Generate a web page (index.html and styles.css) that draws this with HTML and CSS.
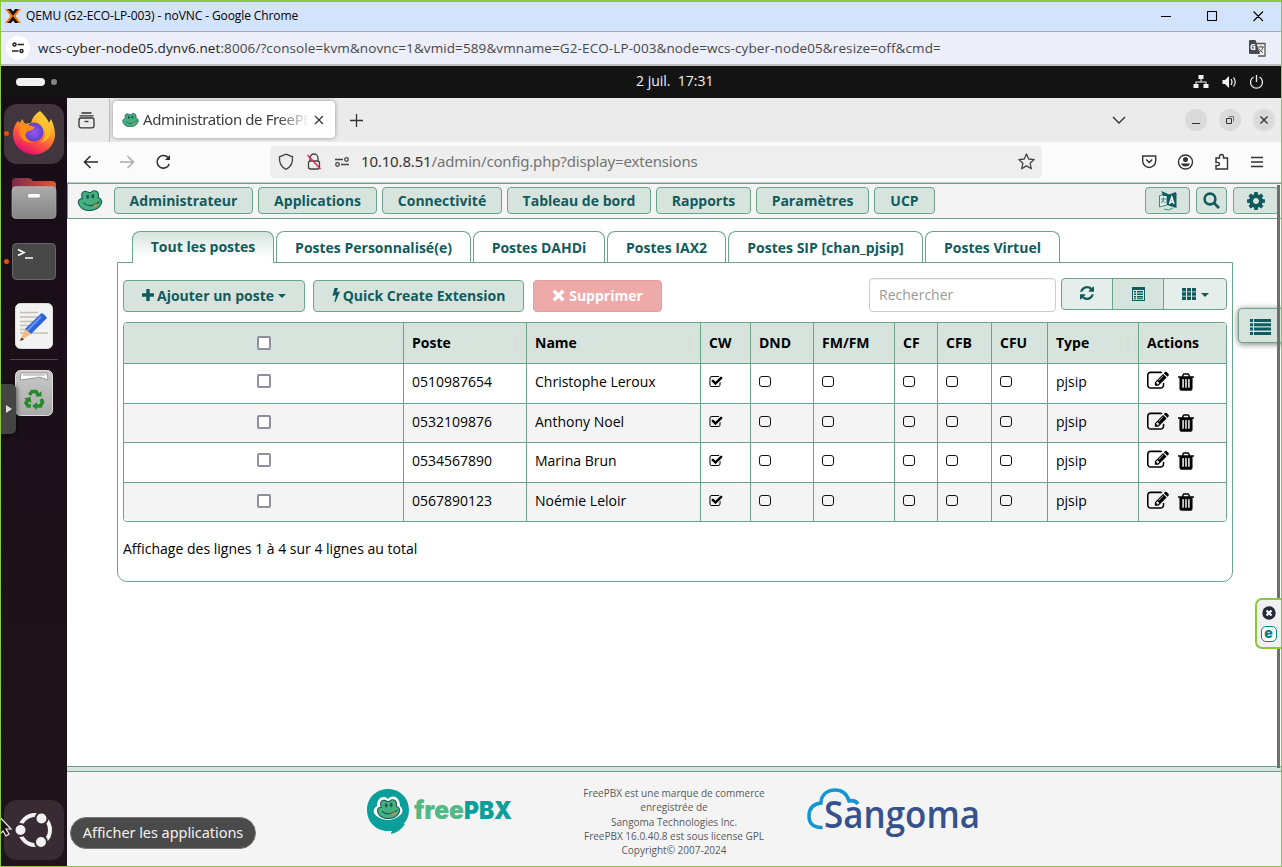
FILE: index.html
```html
<!DOCTYPE html>
<html lang="fr">
<head>
<meta charset="utf-8">
<title>Administration de FreePBX</title>
<link rel="stylesheet" href="styles.css">
</head>
<body>
<svg class="defs" width="0" height="0">
  <symbol id="checked" viewBox="0 0 1792 1792"><path d="M1472 930v318q0 119-84.5 203.5t-203.5 84.5h-832q-119 0-203.500-84.500t-84.500-203.500v-832q0-119 84.500-203.500t203.500-84.500h832q63 0 117 25 15 7 18 23 3 17-9 29l-49 49q-10 10-23 10-3 0-9-2-23-6-45-6h-832q-66 0-113 47t-47 113v832q0 66 47 113t113 47h832q66 0 113-47t47-113v-254q0-13 9-22l64-64q10-10 23-10 6 0 12 3 20 8 20 29zm231-489l-814 814q-24 24-57 24t-57-24l-430-430q-24-24-24-57t24-57l110-110q24-24 57-24t57 24l263 263 647-647q24-24 57-24t57 24l110 110q24 24 24 57t-24 57z"/></symbol>
  <symbol id="edit" viewBox="0 0 1792 1792"><path d="M888 1184l116-116-152-152-116 116v56h96v96h56zm440-720q-16-16-33 1l-350 350q-17 17-1 33t33-1l350-350q17-17 1-33zm80 594v190q0 119-84.500 203.500t-203.500 84.500h-832q-119 0-203.500-84.500t-84.500-203.500v-832q0-119 84.500-203.500t203.500-84.500h832q63 0 117 25 15 7 18 23 3 17-9 29l-49 49q-14 14-32 8-23-6-45-6h-832q-66 0-113 47t-47 113v832q0 66 47 113t113 47h832q66 0 113-47t47-113v-126q0-13 9-22l64-64q15-15 35-7t20 29zm-96-738l288 288-672 672h-288v-288zm444 132l-92 92-288-288 92-92q28-28 68-28t68 28l152 152q28 28 28 68t-28 68z"/></symbol>
  <symbol id="trash" viewBox="192 128 1408 1536"><path d="M704 1376v-704q0-14-9-23t-23-9h-64q-14 0-23 9t-9 23v704q0 14 9 23t23 9h64q14 0 23-9t9-23zm256 0v-704q0-14-9-23t-23-9h-64q-14 0-23 9t-9 23v704q0 14 9 23t23 9h64q14 0 23-9t9-23zm256 0v-704q0-14-9-23t-23-9h-64q-14 0-23 9t-9 23v704q0 14 9 23t23 9h64q14 0 23-9t9-23zm-544-992h448l-48-117q-7-9-17-11h-317q-10 2-17 11zm928 32v64q0 14-9 23t-23 9h-96v948q0 83-47 143.500t-113 60.500h-832q-66 0-113-58.500t-47-141.500v-952h-96q-14 0-23-9t-9-23v-64q0-14 9-23t23-9h309l70-167q15-37 54-63t79-26h320q40 0 79 26t54 63l70 167h309q14 0 23 9t9 23z"/></symbol>
  <symbol id="gear" viewBox="128 128 1536 1536"><path d="M1152 896q0-106-75-181t-181-75-181 75-75 181 75 181 181 75 181-75 75-181zm512-109v222q0 12-8 23t-20 13l-185 28q-19 54-39 91 35 50 107 138 10 12 10 25t-9 23q-27 37-99 108t-94 71q-12 0-26-9l-138-108q-44 23-91 38-16 136-29 186-7 28-36 28h-222q-14 0-24.500-8.500t-11.500-21.500l-28-184q-49-16-90-37l-141 107q-10 9-25 9-14 0-25-11-126-114-165-168-7-10-7-23 0-12 8-23 15-21 51-66.500t54-70.500q-27-50-41-99l-183-27q-13-2-21-12.500t-8-23.500v-222q0-12 8-23t19-13l186-28q14-46 39-92-40-57-107-138-10-12-10-24 0-10 9-23 26-36 98.500-107.500t94.500-71.500q13 0 26 10l138 107q44-23 91-38 16-136 29-186 7-28 36-28h222q14 0 24.500 8.500t11.500 21.500l28 184q49 16 90 37l142-107q9-9 24-9 13 0 25 10 129 119 165 170 7 8 7 22 0 12-8 23-15 21-51 66.500t-54 70.500q26 50 41 98l183 28q13 2 21 12.500t8 23.500z"/></symbol>
  <symbol id="refresh" viewBox="128 128 1536 1536"><path d="M1639 1056q0 5-1 7-64 268-268 434.500t-478 166.500q-146 0-282.500-55t-243.500-157l-129 129q-19 19-45 19t-45-19-19-45v-448q0-26 19-45t45-19h448q26 0 45 19t19 45-19 45l-137 137q71 66 161 102t187 36q134 0 250-65t186-179q11-17 53-117 8-23 30-23h192q13 0 22.500 9.500t9.500 22.500zm25-800v448q0 26-19 45t-45 19h-448q-26 0-45-19t-19-45 19-45l138-138q-148-137-349-137-134 0-250 65t-186 179q-11 17-53 117-8 23-30 23h-199q-13 0-22.500-9.500t-9.500-22.500v-7q65-268 270-434.500t480-166.500q146 0 284 55.500t245 156.500l130-129q19-19 45-19t45 19 19 45z"/></symbol>
  <symbol id="frog" viewBox="0 0 26 22"><path d="M5 9C3 3 6 .8 9 1.500c1.500.4 2.500 1.300 4 1.300S14.500 1 17 .8c4.500-.3 5.500 3.500 4.500 7.200 3.500 1 4.500 4 3 7C22 20 17 21.500 12 21.500 6 21.500 2 18 1 14c-.6-3 1-5 4-5z" fill="#46b07c" stroke="#1b5a5e" stroke-width="1.200"/><ellipse cx="10.500" cy="7" rx="1.500" ry="2.300" fill="#125b61"/><ellipse cx="16" cy="6.500" rx="1.500" ry="2.300" fill="#125b61"/><path d="M6 13.500c4 4 11 4 17-1.500" fill="none" stroke="#125b61" stroke-width="1.200"/><path d="M16 16.500l4.500-2.500c0 3-2.500 4.500-4.500 2.500z" fill="#f08a2c"/></symbol>
</svg>

<div class="window">
  <header class="titlebar">
    <svg class="qemu" width="16" height="14" viewBox="0 0 16 14"><path d="M0 0h3.500L8 5.500 12.500 0H16l-5.500 7 5.500 7h-3.500L8 8.500 3.500 14H0l5.500-7z" fill="#ef7a12"/><path d="M2.500 0H6l2 2.500L10 0h3.500L8 6.700zM2.500 14H6l2-2.500 2 2.500h3.500L8 7.300z" fill="#16110e"/></svg>
    <span class="wintitle">QEMU (G2-ECO-LP-003) - noVNC - Google Chrome</span>
    <svg class="winctl" width="106" height="12" viewBox="0 0 106 12" fill="none" stroke="#000" stroke-width="1.100"><path d="M1 6.500h10M47.500 1.500h9v9h-9zM93.500 1.500l9.500 9.500M103 1.500L93.500 11"/></svg>
  </header>
  <div class="addressbar">
    <span class="siteinfo"><svg width="12" height="12" viewBox="0 0 12 12" fill="none" stroke="#222" stroke-width="1.500"><circle cx="2.500" cy="2.500" r="1.500"/><path d="M5.500 2.500H12M0 9h6.500"/><circle cx="9.500" cy="9" r="1.500"/></svg></span>
    <span class="vncurl"><b>wcs-cyber-node05.dynv6.net</b>:8006/?console=kvm&amp;novnc=1&amp;vmid=589&amp;vmname=G2-ECO-LP-003&amp;node=wcs-cyber-node05&amp;resize=off&amp;cmd=</span>
    <svg class="gtrans" width="17" height="17" viewBox="0 0 17 17"><path d="M7 3.500h9v12.500H9" fill="#f5f5f8" stroke="#555" stroke-width="1.300"/><path d="M1 0h5.500l4.500 14H1q-1 0-1-1V1q0-1 1-1z" fill="#474a4d"/><text x="1" y="10" class="gletter">G</text><path d="M9 7h6M12 5.500V7M14 7c-.7 3-2 4-4 5M10 8.500c1 2 2 3 4 4" stroke="#555" fill="none"/></svg>
  </div>

  <div class="gnomebar">
    <span class="workspace"></span><span class="wsdot"></span>
    <span class="clock">2 juil.&nbsp; 17:31</span>
    <svg class="tray" width="72" height="16" viewBox="0 0 72 16" fill="#f2f2f2"><path d="M5.500 1h5v4h-5zM7.500 5h1v3h-1zM2.500 7.500h11V11h-1V8.500h-9V11h-1zM.500 10h5v4h-5zM10.500 10h5v4h-5zM29.500 6h2.500l4-4v12l-4-4h-2.500z"/><path d="M38 5q2 3 0 6M40.500 3.500q3.500 4.500 0 9" fill="none" stroke="#ddd" stroke-width="1.300"/><path d="M60.500 3a6 6 0 1 0 6 0M63.500 1V8" fill="none" stroke="#eee" stroke-width="1.300"/></svg>
  </div>

  <div class="desktop">
    <aside class="dock">
      <div class="tile active"><svg width="44" height="46" viewBox="0 0 44 46">
        <defs><linearGradient id="fx" x1=".8" y1="0" x2=".3" y2="1"><stop offset="0" stop-color="#ffe94a"/><stop offset=".4" stop-color="#ff9a22"/><stop offset=".7" stop-color="#ff4b45"/><stop offset="1" stop-color="#e00a72"/></linearGradient><radialGradient id="orb"><stop offset="0" stop-color="#9a54f0"/><stop offset="1" stop-color="#5d42c5"/></radialGradient></defs>
        <path d="M28 1c4 4 7 7 9 12l2-4c3 6 4 11 4 16A21 20 0 0 1 1 24C1 19 3 14 6 11l2 2 2-4 3 5c2-1 4-1 6-1 1-5 4-9 9-12z" fill="url(#fx)"/><circle cx="22" cy="22" r="9.500" fill="url(#orb)"/><path d="M9 12c7 2 8 4 14 5-2 4-7 3-9 6-2 4 2 9 8 9-12 3-18-9-13-20z" fill="#ff8b18"/><path d="M28 2c-7 7-1 11 3 16s2 12-3 15c10-2 14-12 8-22" fill="#ffc52d" opacity=".75"/></svg></div>
      <svg class="files" width="44" height="42" viewBox="0 0 44 42"><defs><linearGradient id="fl"><stop stop-color="#792b50"/><stop offset="1" stop-color="#e3582b"/></linearGradient><linearGradient id="gr" x2="0" y2="1"><stop stop-color="#aaa"/><stop offset="1" stop-color="#858585"/></linearGradient></defs><path d="M0 4q0-4 4-4h12q3 0 5 3h19q4 0 4 4v16H0z" fill="url(#fl)"/><rect y="8.500" width="44" height="32" rx="4" fill="url(#gr)" stroke="#aaa" stroke-width=".7"/><rect x="16" y="16" width="12" height="3.500" rx="1.500" fill="#fff"/></svg>
      <svg class="term" width="44" height="38" viewBox="0 0 44 38"><rect x=".5" y=".5" width="43" height="36" rx="4" fill="#484848" stroke="#686868"/><path d="M6 6.500l6 3-6 3M13 15h8" fill="none" stroke="#fff" stroke-width="1.700"/></svg>
      <svg class="writer" width="38" height="46" viewBox="0 0 38 46"><rect x=".5" y=".5" width="37" height="45" rx="5" fill="#f2f2f2" stroke="#ddd"/><path d="M5 9.500h18M5 14h22M5 18.500h17M5 22.500h12M5 26.500h10M5 30h28" stroke="#c2c0b2" stroke-width="1.600"/><path d="M26 10.500q2-1 6 4.500L16 31l-6-5z" fill="#2e62d8"/><path d="M26 13.500L12 28" stroke="#6b95ef" stroke-width="2"/><path d="M10 26l6 5-11 7z" fill="#f2bd83"/><path d="M6.500 34.500l2.500 2L5 38z" fill="#333"/></svg>
      <hr class="docksep">
      <svg class="bin" width="38" height="46" viewBox="0 0 38 46"><defs><linearGradient id="bn" x2="0" y2="1"><stop stop-color="#c9c9c9"/><stop offset="1" stop-color="#aaa"/></linearGradient></defs><rect x=".5" y=".5" width="37" height="45" rx="5" fill="url(#bn)" stroke="#ddd"/><path d="M5 10l1-7h26l1 7-8-3-12 2z" fill="#fff" stroke="#777" stroke-width=".7"/><path d="M8 5h22" stroke="#999"/><g fill="none" stroke="#268a2b" stroke-width="3.600"><path d="M14.500 25l2.500-3.500h4l2.500 4"/><path d="M26 29l1.500 3-2 4H21"/><path d="M16 36h-3l-2-3 2.500-4.500"/></g><path d="M20.500 26.500h6V21zM22 32v8l-5-4zM9 28.500l6.500-1.500 1 6z" fill="#268a2b"/></svg>
      <div class="tile apps"><svg width="38" height="38" viewBox="0 0 38 38"><circle cx="20" cy="19" r="15" fill="none" stroke="#f2f2f2" stroke-width="4"/><g fill="#f2f2f2" stroke="#382b32" stroke-width="2"><circle cx="5.500" cy="19" r="6"/><circle cx="26.500" cy="7.500" r="6"/><circle cx="26" cy="31" r="6"/></g></svg></div>
      <span class="rundot d1"></span><span class="rundot d2"></span>
      <span class="vnchandle"></span>
    </aside>

    <main class="firefox">
      <div class="tabstrip">
        <span class="view"><svg width="17" height="17" viewBox="0 0 17 17" fill="none" stroke="#333" stroke-width="1.300"><path d="M3.500 1h10M1.500 3.800h14"/><rect x="1" y="6" width="15" height="9.800" rx="2"/><path d="M6.500 9.500h4"/></svg></span>
        <div class="tab"><svg width="17" height="14"><use href="#frog"/></svg><span class="tabtext">Administration de FreePBX</span><svg width="10" height="10" viewBox="0 0 10 10" stroke="#333" stroke-width="1.200"><path d="M1 1l8 8M9 1L1 9"/></svg></div>
        <svg class="newtab" width="13" height="13" viewBox="0 0 13 13" stroke="#333" stroke-width="1.300"><path d="M6.500 0v13M0 6.500h13"/></svg>
        <svg class="chev" width="14" height="8" viewBox="0 0 14 8" fill="none" stroke="#333" stroke-width="1.400"><path d="M1 1l6 6 6-6"/></svg>
        <span class="wbtn"><svg width="10" height="10" stroke="#333"><path d="M1 8.500h8"/></svg></span>
        <span class="wbtn"><svg width="10" height="10" viewBox="0 0 10 10" fill="none" stroke="#333"><path d="M1.500 3.500h5v5h-5z"/><path d="M3.500 1.500h5v5" stroke="#777"/></svg></span>
        <span class="wbtn"><svg width="10" height="10" viewBox="0 0 10 10" stroke="#333" stroke-width="1.400"><path d="M1.500 1.500l7 7M8.500 1.500l-7 7"/></svg></span>
      </div>
      <div class="toolbar">
        <svg class="navicons" width="88" height="18" viewBox="0 0 88 18" fill="none" stroke="#2b2b2b" stroke-width="1.500"><path d="M15 9H1.500M7.500 3L1.500 9l6 6"/><path d="M37 9h13.500M44.500 3l6 6-6 6" stroke="#aaa"/><path d="M85 4.500A6.300 6.300 0 1 0 86.300 11"/><path d="M87 2v5h-5z" fill="#2b2b2b" stroke="none"/></svg>
        <div class="urlbox">
          <svg width="74" height="18" viewBox="0 0 74 18" fill="none" stroke="#444" stroke-width="1.300"><path d="M8 1.200L14.500 3.800q.8 9-6.500 12.500Q.7 12.800 1.500 3.800z"/><path d="M32 8V5a4 4 0 0 1 8 0v3"/><rect x="30.500" y="8" width="11" height="8" rx="2"/><path d="M29.500 2l13 14" stroke="#e22850" stroke-width="1.500"/><path d="M57 6.500h8M63 11.500h8"/><circle cx="68.500" cy="6.500" r="1.800"/><circle cx="59.500" cy="11.500" r="1.800"/></svg>
          <span class="pageurl"><b>10.10.8.51</b>/admin/config.php?display=extensions</span>
          <svg width="17" height="17" viewBox="0 0 17 17" fill="none" stroke="#444" stroke-width="1.300" stroke-linejoin="round"><path d="M8.500 1l2.200 5 5.500.6-4.100 3.700 1.200 5.400-4.800-2.800-4.800 2.800 1.200-5.400L.8 6.600 6.300 6z"/></svg>
        </div>
        <svg class="extras" width="122" height="18" viewBox="0 0 122 18" fill="none" stroke="#333" stroke-width="1.400"><path d="M.7 3h13v5a6.500 6.500 0 0 1-13 0zM4.200 6.500l3 3 3-3"/><circle cx="43.500" cy="9" r="7"/><circle cx="43.500" cy="6.500" r="2.500" fill="#333" stroke="none"/><path d="M39 10.500h9c-1 4-8 4-9 0z" fill="#333" stroke="none"/><path d="M74 5h3.500q-.5-3.500 2-3.500T81.500 5h4v11H74v-3.500q3.500.5 3.500-1.500T74 9.500z"/><path d="M109 4.500h12M109 9h12M109 13.500h12"/></svg>
      </div>

      <div class="page">
        <nav class="navbar">
          <svg class="logo" width="26" height="21"><use href="#frog"/></svg>
          <a class="nb w139">Administrateur</a><a class="nb w119">Applications</a><a class="nb w120">Connectivité</a><a class="nb w144">Tableau de bord</a><a class="nb w95">Rapports</a><a class="nb w113">Paramètres</a><a class="nb w61">UCP</a>
          <div class="right">
            <a class="nb w45"><svg width="18" height="20" viewBox="0 0 18 20"><path d="M.5 4.500L8 3v11l-7.500 2z" fill="#dfebe6" stroke="#3c8b84"/><path d="M2.500 0L10 3.500 17 1v4H4z" fill="#105b5e"/><path d="M8 4l9.500-2v15L8 14z" fill="#105b5e"/><path d="M10.500 13l2.300-7 2.200 7M11.300 11h3" stroke="#fff" fill="none" stroke-width="1.400"/><path d="M2 8h5M4.500 6.500V8l-2 4M3.500 9l3 3M5 18q5 2.500 9-1" stroke="#3c8b84" fill="none"/></svg></a>
            <a class="nb w31"><svg width="17" height="17" viewBox="0 0 17 17" fill="none" stroke="#105b5e" stroke-width="2.600"><circle cx="7" cy="7" r="5.400"/><path d="M11 11l5 5"/></svg></a>
            <a class="nb w47"><svg width="18" height="18" fill="#105b5e"><use href="#gear"/></svg></a>
          </div>
        </nav>

        <section class="content">
          <div class="tabs"><a class="on w142">Tout les postes</a><a class="w195">Postes Personnalisé(e)</a><a class="w132">Postes DAHDi</a><a class="w119">Postes IAX2</a><a class="w195">Postes SIP [chan_pjsip]</a><a class="w135">Postes Virtuel</a></div>
          <div class="panel">
            <div class="tools">
              <a class="btn w182"><svg width="12" height="12" viewBox="0 0 12 12"><path d="M4.300 0h3.400v4.300H12v3.400H7.700V12H4.300V7.700H0V4.300h4.300z"/></svg>Ajouter un poste<i class="caret"></i></a>
              <a class="btn w211"><svg width="8" height="14" viewBox="0 0 8 14"><path d="M2.500 0H6L4.500 4 8 3.500 3.500 14h-1l1.500-7L.5 8z"/></svg>Quick Create Extension</a>
              <a class="btn red w129"><svg width="13" height="13" viewBox="0 0 13 13"><path d="M3 .5l3.500 3.500L10 .5 12.500 3 9 6.500l3.500 3.500L10 12.500 6.500 9 3 12.500.5 10 4 6.500.5 3z"/></svg>Supprimer</a>
              <div class="search">Rechercher</div>
              <div class="group">
                <a><svg width="14" height="14"><use href="#refresh"/></svg></a>
                <a class="pressed"><svg width="13" height="14" viewBox="0 0 13 14"><path fill-rule="evenodd" d="M0 0h13v14H0zM1 3v10h11V3z"/><path d="M2 4h2v1.500H2zM5 4h6v1.500H5zM2 6.500h2V8H2zM5 6.500h6V8H5zM2 9h2v1.500H2zM5 9h6v1.500H5zM2 11.300h2v1H2zM5 11.300h6v1H5z"/></svg></a>
                <a><svg width="14" height="14" viewBox="0 0 14 14"><path d="M0 1h4v3.400H0zM5 1h4v3.400H5zM10 1h4v3.400h-4zM0 5.300h4v3.400H0zM5 5.300h4v3.400H5zM10 5.300h4v3.400h-4zM0 9.600h4V13H0zM5 9.600h4V13H5zM10 9.600h4V13h-4z"/></svg><i class="caret"></i></a>
              </div>
            </div>
            <table class="grid">
              <colgroup><col class="c280"><col class="c123"><col class="c174"><col class="c50"><col class="c63"><col class="c81"><col class="c43"><col class="c54"><col class="c56"><col class="c91"><col class="c87"></colgroup>
              <thead><tr><th class="pick"><i class="box"></i></th><th class="sort">Poste</th><th class="sort">Name</th><th>CW</th><th>DND</th><th>FM/FM</th><th>CF</th><th>CFB</th><th>CFU</th><th class="sort">Type</th><th>Actions</th></tr></thead>
              <tbody id="rows"></tbody>
            </table>
            <p class="summary">Affichage des lignes 1 à 4 sur 4 lignes au total</p>
          </div>
        </section>

        <footer class="footer">
          <svg class="fpbx" width="148" height="48" viewBox="0 0 148 48"><path d="M22 1C34 1 43 10 43 22c0 11-8 19-18 21v3-1l1-2H22C10 43 1 34 1 22S10 1 22 1zM25 36h14q-5 8-14 10z" fill="#0a9f9b"/><path d="M11 18C11 9 18 7 22 11c5-5 12-2 12 7 4 3 3 8-1 10-6 5-15 5-21 1-5-3-6-8-1-11z" fill="#fff"/><svg x="9.500" y="11" width="26" height="20"><use href="#frog"/></svg><text x="48" y="31" textLength="50" lengthAdjust="spacingAndGlyphs" class="free">free</text><text x="98" y="31" textLength="48" lengthAdjust="spacingAndGlyphs" class="pbx">PBX</text></svg>
          <p class="legal">FreePBX est une marque de commerce<br>enregistrée de<br>Sangoma Technologies Inc.<br>FreePBX 16.0.40.8 est sous license GPL<br>Copyright© 2007-2024</p>
          <svg class="sang" width="174" height="52" viewBox="0 0 174 52"><path d="M15.500 39.500C6 40 2 35 2 28c0-7 4-12 12-13 0-8 6-13 14-13 7 0 12 4 14 11 4-1 7 0 9 3" fill="none" stroke="#1695d3" stroke-width="3.500"/><text x="17" y="40" textLength="156" lengthAdjust="spacingAndGlyphs" class="sangtext">Sangoma</text></svg>
        </footer>
        <a class="sidetab"><svg width="21" height="16" viewBox="0 0 21 16"><path d="M0 0h3v3H0zM4 0h17v3H4zM0 4.300h3v3H0zM4 4.300h17v3H4zM0 8.600h3v3H0zM4 8.600h17v3H4zM0 13h3v3H0zM4 13h17v3H4z"/></svg></a>
        <span class="scroll"></span>
      </div>
    </main>
  </div>
  <div class="tooltip">Afficher les applications</div>
  <svg class="cursor" width="14" height="22" viewBox="0 0 14 22"><path d="M-4-4L11 12H6l3 5-3 2-3-5-4 4z" fill="#1d1418" stroke="#eee" stroke-width="1.200"/></svg>
  <div class="floater"><svg width="14" height="14" viewBox="0 0 14 14"><circle cx="7" cy="7" r="6.700" fill="#222b38"/><path d="M4.500 4.500l5 5M9.500 4.500l-5 5" stroke="#fff" stroke-width="2.200"/></svg><span class="eset">e</span></div>
</div>
<script src="rows.js"></script>
</body>
</html>
```
FILE: rows.js
```js
const people = [
  ["0510987654", "Christophe Leroux"],
  ["0532109876", "Anthony Noel"],
  ["0534567890", "Marina Brun"],
  ["0567890123", "Noémie Leloir"]
];
const off = '<td><i class="flag"></i></td>';
document.getElementById("rows").innerHTML = people.map(([ext, name]) =>
  `<tr><td class="pick"><i class="box"></i></td><td>${ext}</td><td>${name}</td>` +
  '<td><svg class="flagon" width="14" height="14"><use href="#checked"/></svg></td>' +
  off.repeat(5) +
  '<td>pjsip</td><td class="acts"><svg width="22" height="22"><use href="#edit"/></svg><svg width="16" height="18"><use href="#trash"/></svg></td></tr>'
).join("");
```
FILE: styles.css
```css
* { box-sizing: border-box; }
body { margin: 0; font: 14px "Open Sans", sans-serif; color: #000; overflow: hidden; }
svg { display: block; flex: none; overflow: visible; }
.defs { position: absolute; }
.window { width: 1282px; height: 867px; border: 1px solid #8cc63f; border-top-width: 2px; display: flex; flex-direction: column; position: relative; background: #fff; overflow: hidden; }

.titlebar { height: 30px; background: #d3e3fd; border-bottom: 1px solid #a9abb0; display: flex; align-items: center; padding: 0 15px 2px 4px; }
.wintitle { font-size: 12px; margin-left: 5px; letter-spacing: -.1px; flex: 1; }
.addressbar { height: 34px; background: #eceef9; border-bottom: 2px solid #bcbdc0; display: flex; align-items: center; padding: 0 15px 0 5px; }
.siteinfo { width: 24px; height: 24px; border-radius: 50%; background: #fff; display: grid; place-items: center; }
.vncurl { font-size: 13.5px; color: #47484c; margin-left: 8px; flex: 1; white-space: nowrap; letter-spacing: .1px; }
.vncurl b { font-weight: 400; color: #1f1f1f; }
.gletter { font: bold 8px "Open Sans", sans-serif; fill: #fff; }

.gnomebar { height: 32px; flex: none; background: #131313; display: flex; align-items: center; padding: 0 16px 0 15px; color: #f2f2f2; }
.workspace { width: 29px; height: 8px; border-radius: 4px; background: #f2f2f2; }
.wsdot { width: 6px; height: 6px; border-radius: 50%; background: #858585; margin-left: 6px; }
.clock { margin-left: 579px; flex: 1; font-size: 14px; letter-spacing: 0; padding-bottom: 3px; }

.desktop { flex: 1; display: flex; min-height: 0; }
.dock { width: 66px; flex: none; background: linear-gradient(#180d17, #20141c); padding: 6px 3px; display: flex; flex-direction: column; align-items: center; position: relative; }
.tile { width: 60px; height: 60px; border-radius: 13px; background: #41363e; display: grid; place-items: center; }
.tile.apps { background: #382b32; margin-top: auto; }
.tile.active svg { margin-top: -2px; }
.files { margin-top: 14px; }
.term { margin-top: 23px; }
.writer { margin-top: 22px; }
.docksep { width: 48px; height: 1px; border: 0; background: #544b51; margin: 10px 0; }
.rundot { position: absolute; left: 3px; width: 5px; height: 5px; border-radius: 50%; background: #e1500f; }
.d1 { top: 33px; }
.d2 { top: 161px; }
.vnchandle { position: absolute; left: 0; top: 286px; width: 15px; height: 50px; border-radius: 0 5px 5px 0; background: #444; box-shadow: 1px 1px 4px #0008; display: grid; place-items: center; }
.vnchandle::after { content: ""; border-left: 6px solid #ddd; border-top: 4px solid transparent; border-bottom: 4px solid transparent; }

.firefox { flex: 1; min-width: 0; display: flex; flex-direction: column; }
.tabstrip { height: 44px; background: #ebebeb; display: flex; align-items: center; padding-right: 6px; }
.view { width: 43px; height: 44px; border-right: 1px solid #bdbdbd; display: grid; place-items: center; padding-right: 3px; }
.tab { width: 222px; height: 37px; margin: 0 0 1px 3px; background: #fff; border-radius: 4px; box-shadow: 0 0 4px #0006; display: flex; align-items: center; padding: 0 11px 0 9px; }
.tabtext { font: 15px "Noto Sans", sans-serif; letter-spacing: -.4px; color: #3c3c3c; width: 168px; margin: -1px 5px 0 4px; overflow: hidden; white-space: nowrap; -webkit-mask-image: linear-gradient(90deg, #000 82%, transparent); mask-image: linear-gradient(90deg, #000 82%, transparent); }
.newtab { margin-left: 15px; }
.chev { margin-left: auto; margin-right: 47px; }
.wbtn { width: 22px; height: 22px; border-radius: 50%; background: #dadada; display: grid; place-items: center; margin-left: 12px; }
.toolbar { height: 41px; background: #fbfbfb; border-bottom: 1px solid #c9c9c9; display: flex; align-items: center; padding: 0 17px 1px 16px; }
.urlbox { width: 772px; height: 32px; margin-left: 99px; border-radius: 4px; background: #eeeeee; display: flex; align-items: center; padding: 0 7px 0 8px; }
.pageurl { flex: 1; margin: -1px 0 0 9px; font: 15px "Noto Sans", sans-serif; color: #747474; letter-spacing: -.16px; }
.pageurl b { font-weight: 400; color: #333; }
.extras { margin-left: auto; }

.page { flex: 1; display: flex; flex-direction: column; position: relative; min-height: 0; overflow: hidden; }
.navbar { height: 36px; background: #f4f4f4; border: 1px solid #69a58a; border-right: 0; display: flex; align-items: center; gap: 5px; padding: 0 2px 1px 9px; }
.logo { margin-right: 6px; }
.nb { height: 27px; border: 1px solid #69a58a; border-radius: 4px; background: #d7e4de; color: #105b5e; font-weight: 700; display: flex; align-items: center; justify-content: center; white-space: nowrap; flex: none; }
.right { display: flex; gap: 6px; margin-left: auto; }
.w139 { width: 139px; } .w119 { width: 119px; } .w120 { width: 120px; } .w144 { width: 144px; } .w95 { width: 95px; } .w113 { width: 113px; } .w61 { width: 61px; }
.w45 { width: 45px; } .w31 { width: 31px; } .w47 { width: 46px; padding-right: 1px; }
.w142 { width: 142px; } .w195 { width: 195px; } .w132 { width: 132px; } .w135 { width: 135px; }
.w182 { width: 182px; } .w211 { width: 211px; } .w129 { width: 129px; }

.content { padding: 12px 48px 0 50px; flex: 1; }
.tabs { display: flex; gap: 2px; padding-left: 15px; height: 32px; position: relative; }
.tabs a { height: 31px; border: 1px solid #69a58a; border-bottom: 0; border-radius: 8px 8px 0 0; color: #105b5e; font-weight: 700; display: flex; align-items: center; justify-content: center; white-space: nowrap; }
.tabs .on { height: 32px; padding-bottom: 2px; background: linear-gradient(#d7e4de, #fff 85%); }
.panel { margin-top: -1px; width: 1116px; height: 320px; border: 1px solid #69a58a; border-radius: 0 0 10px 10px; padding: 15px 5px; }
.tools { display: flex; align-items: flex-start; height: 44px; }
.btn { height: 32px; margin: 2px 8px 0 0; padding-bottom: 2px; border: 1px solid #69a58a; border-radius: 4px; background: #d7e4de; color: #105b5e; font-weight: 700; display: flex; align-items: center; justify-content: center; gap: 3px; white-space: nowrap; }
.btn svg, .group svg, .sidetab svg { fill: #105b5e; }
.btn.red { background: #eea9a9; border-color: #e99c9c; color: #fff; margin-left: 1px; }
.btn.red svg { fill: #fff; margin-right: 1px; }
.caret { border-top: 4px solid #105b5e; border-left: 4px solid transparent; border-right: 4px solid transparent; margin: 2px 0 0 1px; }
.search { width: 187px; height: 34px; margin-left: auto; border: 1px solid #ccc; border-radius: 4px; box-shadow: inset 0 1px 1px #0001; color: #999; padding: 0 9px; line-height: 32px; }
.group { width: 166px; height: 32px; margin-left: 5px; display: flex; border: 1px solid #69a58a; border-radius: 4px; background: #e5eeea; }
.group a { width: 50px; display: flex; align-items: center; justify-content: center; gap: 4px; padding-bottom: 1px; }
.group a:first-child { padding-bottom: 2px; }
.group a:last-child { flex: 1; }
.group a.pressed { width: 52px; background: #d7e4de; border: solid #69a58a; border-width: 0 1px; }

.grid { width: 1104px; border: 1px solid #69a58a; border-radius: 4px; border-spacing: 0; table-layout: fixed; overflow: hidden; }
.c280 { width: 280px; } .c123 { width: 123px; } .c174 { width: 174px; } .c50 { width: 50px; } .c63 { width: 63px; } .c81 { width: 81px; } .c43 { width: 43px; } .c54 { width: 54px; } .c56 { width: 56px; } .c91 { width: 91px; } .c87 { width: 87px; }
.grid th, .grid td { padding: 0 8px 1px; text-align: left; border: solid #69a58a; border-width: 0 1px 1px 0; white-space: nowrap; }
.grid th { height: 41px; background: #d7e4de; position: relative; }
.grid td { height: 40px; padding-bottom: 5px; }
.grid tr:nth-child(even) td { background: #f4f4f4; height: 39px; padding-bottom: 3px; }
.grid tr > :last-child { border-right: 0; }
.grid tbody tr:last-child td { border-bottom: 0; height: 38px; }
.sort::before, .sort::after { content: ""; position: absolute; right: 7px; border: 3px solid transparent; }
.sort::before { top: 12px; border-bottom: 5px solid #dddada; }
.sort::after { top: 22px; border-top: 5px solid #dddada; }
.grid .pick { text-align: center; }
.box { display: block; margin: 0 auto; width: 14px; height: 14px; border: 2px solid #8f8f9d; border-radius: 2px; background: #fff; }
.flag { display: block; width: 12px; height: 11px; border: 1px solid #111; border-radius: 3px; }
.flagon { margin-top: 1px; }
.acts svg { display: inline-block; vertical-align: middle; }
.acts svg:first-child { margin: 0 9px 0 0; }
.acts svg:last-child { margin-top: 2px; }
.summary { margin: 17px 0 0; line-height: 20px; }

.footer { height: 100px; background: #f4f4f4; border-top: 1px solid #69a58a; position: relative; display: flex; align-items: flex-start; padding: 21px 0 0 299px; flex: none; }
.footer::before { content: ""; position: absolute; inset: 0 0 auto; height: 4px; background: #d7e4de; border-bottom: 1px solid #69a58a; }
.legal { width: 200px; margin: -2px 0 0 60px; font-size: 10px; line-height: 14.25px; text-align: center; color: #58595b; white-space: nowrap; }
.sang { margin-left: 33px; }
.free, .pbx { font: 900 25px Inter, sans-serif; fill: #50b985; }
.pbx { fill: #0a9f9b; }
.sangtext { font: 600 37px "Open Sans", sans-serif; fill: #35528c; }
.sidetab { position: absolute; left: 1171px; top: 125px; width: 52px; height: 35px; border: 1px solid #69a58a; border-radius: 4px; background: #d7e4de; box-shadow: 0 1px 6px #0008; padding: 10px 11px; }
.scroll { position: absolute; left: 1210px; top: 2px; width: 3px; height: 583px; background: #6f6f6f; }
.tooltip { position: absolute; left: 69px; top: 815px; width: 186px; height: 32px; border: 1px solid #777; border-radius: 16px; background: #4a4a4a; color: #f2f2f2; text-align: center; font: 14.5px/29px "Noto Sans", sans-serif; letter-spacing: -.05px; white-space: nowrap; }
.cursor { position: absolute; left: -1px; top: 815px; }
.floater { position: absolute; right: -1px; top: 596px; width: 27px; height: 51px; border: 2px solid #8cc63f; border-right: 0; border-radius: 7px 0 0 7px; background: #f1f1f1; display: flex; flex-direction: column; align-items: center; gap: 6px; padding: 6px 2px 0 0; }
.eset { width: 16px; height: 16px; border: 1.500px solid #078489; border-radius: 5px; background: #fff; color: #078489; font: 900 14px/12px Inter, sans-serif; text-align: center; }
```
